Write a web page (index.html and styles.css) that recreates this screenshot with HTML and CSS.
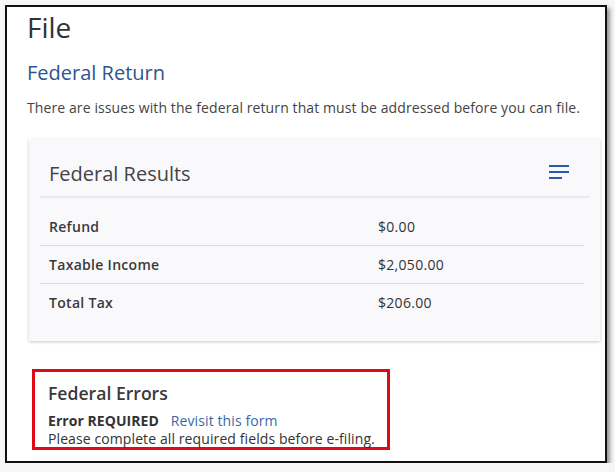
FILE: index.html
```html
<!DOCTYPE html>
<html>
<head>
<meta charset="utf-8">
<link rel="stylesheet" href="styles.css">
</head>
<body>
<div class="frame">
  <h1 class="page-title">File</h1>
  <h2 class="section-title">Federal Return</h2>
  <p class="notice">There are issues with the federal return that must be addressed before you can file.</p>
  <div class="card">
    <div class="card-header">
      <span class="card-title">Federal Results</span>
      <svg class="menu-icon" width="20" height="14" viewBox="0 0 20 14">
        <rect x="0" y="0" width="20" height="2" fill="#2a5ba6"/>
        <rect x="0" y="6" width="20" height="2" fill="#2a5ba6"/>
        <rect x="0" y="12" width="13" height="2" fill="#2a5ba6"/>
      </svg>
    </div>
    <div class="rows">
      <div class="row"><span class="label">Refund</span><span class="value">$0.00</span></div>
      <div class="row"><span class="label">Taxable Income</span><span class="value">$2,050.00</span></div>
      <div class="row last"><span class="label">Total Tax</span><span class="value">$206.00</span></div>
    </div>
  </div>
  <div class="errors">
    <div class="errors-title">Federal Errors</div>
    <div class="error-line"><span class="error-code">Error REQUIRED</span><a class="error-link" href="#">Revisit this form</a></div>
    <div class="error-msg">Please complete all required fields before e-filing.</div>
  </div>
</div>
</body>
</html>
```
FILE: styles.css
```css
html, body {
  margin: 0;
  padding: 0;
  background: #f6f6f6;
  font-family: "Open Sans", "Liberation Sans", sans-serif;
  color: #333;
}
.frame {
  margin: 5px 0 0 5px;
  height: 454px;
  width: 573px;
  border: 2px solid #111;
  background: #fff;
  box-shadow: 3px 3px 4px rgba(0,0,0,0.4);
  padding: 0 5px 0 20px;
  box-sizing: content-box;
  overflow: hidden;
}
.page-title {
  margin: 3px 0 0 0;
  font-size: 28px;
  line-height: 34px;
  font-weight: 400;
  color: #333;
}
.section-title {
  margin: 16px 0 0 0;
  font-size: 20px;
  line-height: 26px;
  font-weight: 400;
  color: #2d5592;
}
.notice {
  margin: 12px 0 0 0;
  font-size: 14px;
  line-height: 20px;
  letter-spacing: 0.1px;
  color: #444;
}
.card {
  margin: 21px 0 0 2px;
  background: #f9f9fc;
  box-shadow: 0 1px 3px rgba(0,0,0,0.22);
  padding-bottom: 20px;
}
.card-header {
  display: flex;
  align-items: center;
  justify-content: space-between;
  height: 57px;
  margin: 0 10px 0 11px;
  padding: 0 21px 0 9px;
  border-bottom: 2px solid #ebebef;
}
.card-title {
  font-size: 20px;
  color: #444;
  padding-top: 12px;
}
.menu-icon {
  display: block;
  margin-top: 8px;
}
.rows {
  margin: 0 16px 0 11px;
  padding-top: 10px;
}
.row {
  display: grid;
  grid-template-columns: 329px 1fr;
  align-items: center;
  height: 37px;
  padding-left: 9px;
  border-bottom: 1px solid #dadade;
  font-size: 14px;
  letter-spacing: 0.3px;
}
.row.last {
  border-bottom: none;
}
.label {
  font-weight: 600;
  color: #3a3a3a;
}
.value {
  color: #333;
}
.errors {
  display: inline-block;
  margin: 28px 0 0 5px;
  border: 3px solid #e00b12;
  padding: 8px 12px 0 13px;
  height: 81px;
  box-sizing: border-box;
  color: #333;
}
.errors-title {
  font-size: 17.6px;
  font-weight: 600;
  line-height: 26px;
  color: #3a3a3a;
}
.error-line {
  margin-top: 6px;
  font-size: 14px;
  line-height: 18px;
}
.error-code {
  font-weight: 700;
  margin-right: 12px;
  letter-spacing: 0.05px;
}
.error-link {
  color: #3b68a8;
  text-decoration: none;
  letter-spacing: 0.1px;
}
.error-msg {
  font-size: 14px;
  line-height: 18px;
  letter-spacing: 0.1px;
  color: #333;
}
```
